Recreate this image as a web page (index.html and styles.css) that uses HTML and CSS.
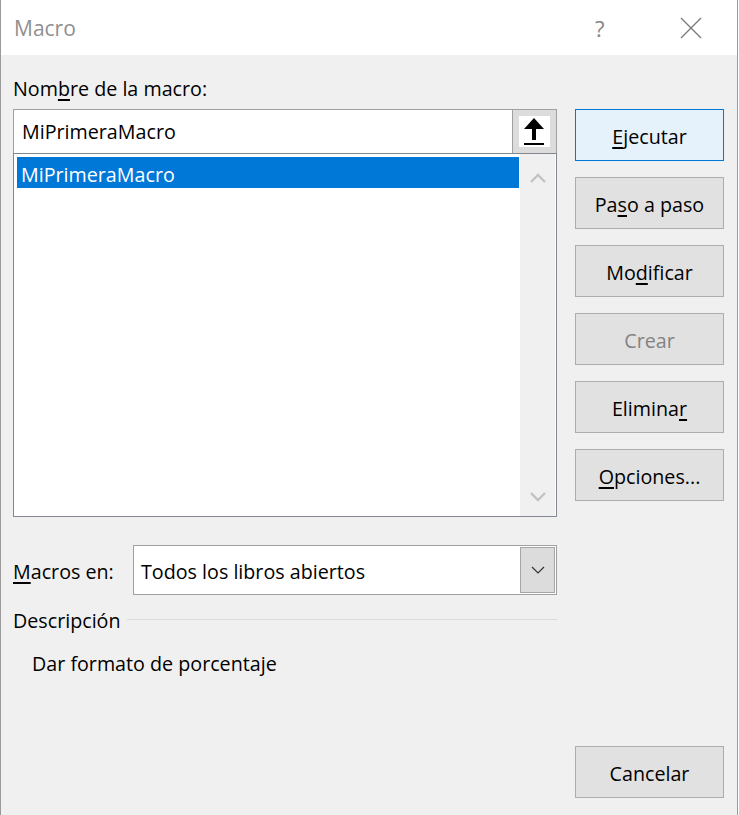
FILE: index.html
```html
<!doctype html>
<html lang="es">
<head>
  <meta charset="utf-8" />
  <title>Macro</title>
  <link rel="stylesheet" href="styles.css">
</head>
<body>
<div class="dialog">

  <header class="titlebar">
    <span class="title">Macro</span>
    <span class="help">?</span>
    <span class="close">
      <svg width="22" height="22" viewBox="0 0 22 22"><path d="M1 1L21 21M21 1L1 21" stroke="#777" stroke-width="1.3" fill="none"/></svg>
    </span>
  </header>

  <main class="content">
    <section class="left">
      <div class="field-label">Nom<u>b</u>re de la macro:</div>

      <div class="name-row">
        <div class="name-input">MiPrimeraMacro</div>
        <div class="collapse">
          <span class="collapse-icon">
            <svg width="31" height="31" viewBox="0 0 31 31">
              <path d="M15 2L25 13H17V24H13V13H5Z" fill="#000"/>
              <rect x="5" y="27" width="20" height="2" fill="#000"/>
            </svg>
          </span>
        </div>
      </div>

      <div class="listbox">
        <div class="items">
          <div class="item selected">MiPrimeraMacro</div>
        </div>
        <div class="scrollbar">
          <svg width="16" height="10" viewBox="0 0 16 10"><path d="M1 9L8 2L15 9" stroke="#c2c2c2" stroke-width="2.4" fill="none"/></svg>
          <svg width="16" height="10" viewBox="0 0 16 10"><path d="M1 1L8 8L15 1" stroke="#c2c2c2" stroke-width="2.4" fill="none"/></svg>
        </div>
      </div>

      <div class="macros-row">
        <span class="macros-label"><u>M</u>acros en:</span>
        <div class="combo">
          <span class="combo-text">Todos los libros abiertos</span>
          <span class="combo-btn">
            <svg width="14" height="8" viewBox="0 0 14 8"><path d="M1 1L7 7L13 1" stroke="#333" stroke-width="1.2" fill="none"/></svg>
          </span>
        </div>
      </div>

      <div class="desc-head">
        <span>Descripción</span>
        <span class="rule"></span>
      </div>
      <p class="desc">Dar formato de porcentaje</p>
    </section>

    <aside class="buttons">
      <button class="btn default"><u>E</u>jecutar</button>
      <button class="btn">Pa<u>s</u>o a paso</button>
      <button class="btn">Mo<u>d</u>ificar</button>
      <button class="btn" disabled>Crear</button>
      <button class="btn">Elimina<u>r</u></button>
      <button class="btn"><u>O</u>pciones...</button>
      <button class="btn cancel">Cancelar</button>
    </aside>
  </main>

</div>
</body>
</html>
```

FILE: styles.css
```css
:root{
  --face:#f0f0f0;
  --btn:#e1e1e1;
  --btn-border:#adadad;
  --accent:#0078d7;
}

*{box-sizing:border-box;margin:0;padding:0}

body{
  font-family:"Segoe UI","Open Sans",sans-serif;
  font-size:19.7px;
  color:#000;
  background:#fff;
}

u{text-underline-offset:3px;text-decoration-thickness:1.5px}

.dialog{
  width:738px;
  height:815px;
  border-left:1px solid #9a9a9a;
  border-right:1px solid #9a9a9a;
  display:flex;
  flex-direction:column;
  background:var(--face);
}

.titlebar{
  height:55px;
  background:#fff;
  display:flex;
  align-items:center;
  padding:1px 0 0 13px;
}
.title{font-size:21px;color:#909090;flex:1}
.help{font-size:22px;color:#858585;width:24px;margin-right:63px;padding-left:2px}
.close{width:22px;height:22px;margin-right:35px;display:flex}

.content{
  flex:1;
  display:grid;
  grid-template-columns:544px 149px;
  gap:18px;
  padding:20px 13px 17px 12px;
}

.left{display:flex;flex-direction:column}

.field-label{height:27px;line-height:27px;margin-bottom:7px}

.name-row{display:flex;height:44px}
.name-input{
  flex:1;
  background:#fff;
  border:1px solid #a0a0a0;
  border-right:none;
  border-bottom:none;
  padding:1px 0 0 8px;
  line-height:42px;
}
.collapse{
  width:45px;
  background:#dcdcdc;
  border:1px solid #a0a0a0;
  border-bottom:none;
  display:flex;
  justify-content:center;
  padding-top:6px;
}
.collapse-icon{width:31px;height:31px;background:#fff;display:flex}

.listbox{
  height:364px;
  border:1px solid #828790;
  background:#fff;
  display:flex;
  padding:3px 1px 2px 3px;
}
.items{flex:1}
.item{height:31px;line-height:31px;padding:2px 0 0 4px}
.item.selected{background:var(--accent);color:#fff;margin-right:1px}
.scrollbar{
  width:35px;
  margin-top:-3px;
  margin-bottom:-2px;
  background:var(--face);
  display:flex;
  flex-direction:column;
  justify-content:space-between;
  align-items:center;
  padding:19px 0 14px;
}

.macros-row{display:flex;align-items:center;margin-top:28px;height:50px}
.macros-label{width:120px;padding-top:2px}
.combo{
  flex:1;
  height:50px;
  background:#fff;
  border:1px solid #a0a0a0;
  display:flex;
  align-items:center;
  padding:0 1px 0 7px;
}
.combo-text{flex:1;padding-top:2px}
.combo-btn{
  width:35px;
  height:46px;
  background:#dcdcdc;
  border:1px solid #a6a6a6;
  display:flex;
  align-items:center;
  justify-content:center;
}

.desc-head{display:flex;align-items:center;gap:6px;margin-top:10px;height:30px}
.rule{flex:1;height:1px;background:#dcdcdc;margin-top:-2px}

.desc{margin-top:15px;padding-left:19px;line-height:28px}

.buttons{display:flex;flex-direction:column;gap:16px;padding-top:34px}

.btn{
  height:52px;
  font:inherit;
  color:#000;
  background:var(--btn);
  border:1px solid var(--btn-border);
  padding-top:2px;
}
.btn.default{background:#e5f1fb;border-color:var(--accent)}
.btn:disabled{color:#838383}
.btn.cancel{margin-top:auto}
```
